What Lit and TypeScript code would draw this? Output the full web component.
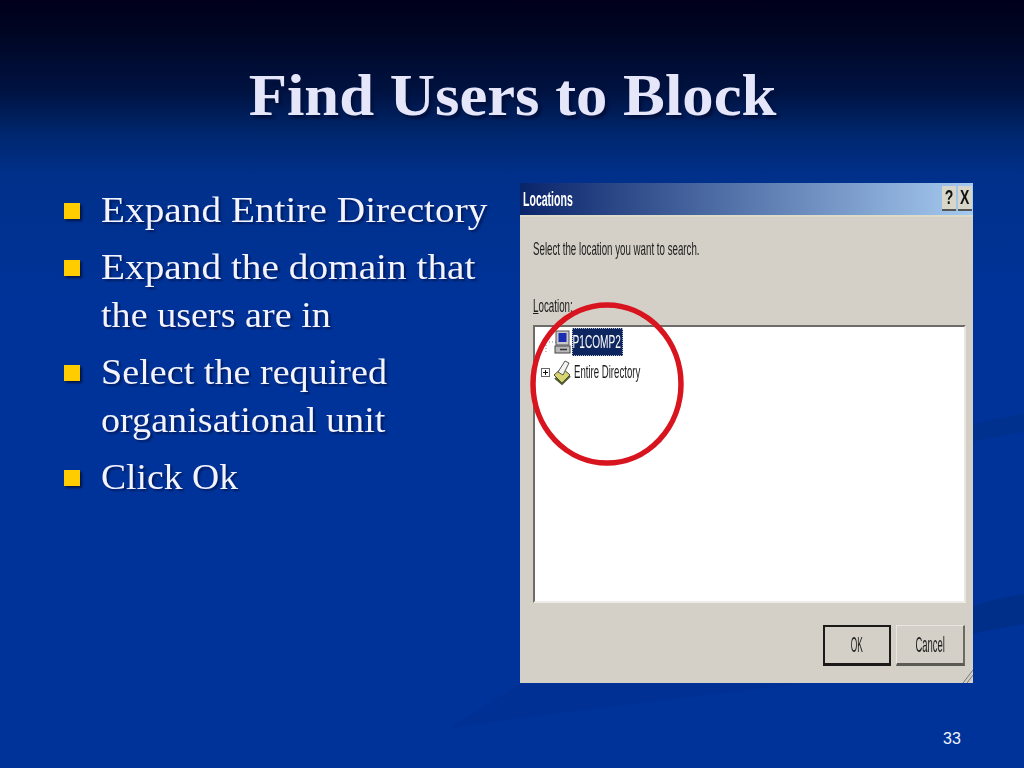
import { LitElement, html, css } from "lit";
import { customElement } from "lit/decorators.js";

@customElement("app-root")
export class AppRoot extends LitElement {
  static styles = css`
    :host { display: block; width: 1024px; height: 768px; overflow: hidden; }
    .slide {
      position: relative; width: 1024px; height: 768px; box-sizing: border-box;
      background: linear-gradient(180deg, #00001a 0px, #000522 30px, #001240 90px, #00276f 135px, #00308a 175px, #003399 300px, #003399 100%);
      font-family: "Liberation Serif", serif; color: #fff;
      display: flex; flex-direction: column;
    }
    .decor { position: absolute; inset: 0; width: 1024px; height: 768px; }
    h1 {
      position: relative; margin: 0; height: 183px; box-sizing: border-box; padding: 59px 0 0 2px;
      text-align: center; font-size: 60px; line-height: 72px; font-weight: 700; color: #e6e6fa;
    }
    h1 span { display: inline-block; transform: scaleX(1.045); text-shadow: 3px 3px 3px #00103c; }
    .content { position: relative; display: flex; align-items: flex-start; padding-left: 64px; }
    ul { list-style: none; margin: 0; padding: 3px 0 0; width: 456px; flex: none; }
    li {
      display: flex; gap: 21px; font-size: 36px; line-height: 48px; margin-bottom: 9px;
      text-shadow: 2px 2px 2px #001c5e; color: #f4f4ff;
    }
    .bullet { flex: none; width: 16px; height: 16px; margin-top: 17px; background: #ffcc00; box-shadow: 2px 2px 2px #00154a; }
    .txt { display: flex; flex-direction: column; align-items: flex-start; white-space: nowrap; }
    .txt span { display: block; transform-origin: left center; }
    .wide { transform: scaleX(1.092); }
    .mid { transform: scaleX(1.06); }
    .nar { transform: scaleX(1.046); }

    .dialog { width: 453px; height: 500px; background: #d4d0c8; display: flex; flex-direction: column; color: #1c1c1c; font-family: "Liberation Sans", sans-serif; position: relative; filter: blur(0.35px); }
    .titlebar {
      height: 34px; flex: none; display: flex; align-items: center; justify-content: space-between;
      background: linear-gradient(90deg, #0a246a, #a6caf0); padding: 0 1px 0 3px; box-sizing: border-box;
      border-bottom: 2px solid #dcdac8;
    }
    .cond { display: inline-block; transform-origin: left center; white-space: nowrap; }
    .ttl { color: #fff; font-weight: 700; font-size: 20px; transform: scaleX(0.527); }
    .ctrls { display: flex; gap: 2px; margin-bottom: 2px; }
    .ctrl {
      width: 14px; height: 25px; background: #d8d6c8; border-bottom: 2px solid #555; box-sizing: border-box;
      color: #111; font-weight: 700; font-size: 20px; line-height: 23px; text-align: center;
    }
    .ctrl span { display: inline-block; transform: scaleX(0.7); }
    .body { flex: 1; padding: 20px 7px 0 13px; display: flex; flex-direction: column; }
    .select { font-size: 19px; line-height: 24px; transform: scaleX(0.512); }
    .loc { margin-top: 33px; font-size: 19px; line-height: 24px; height: 24px; transform: scaleX(0.516); }
    .loc u { text-decoration: underline; }
    .tree {
      margin-top: 7px; height: 278px; box-sizing: border-box; background: #fff;
      border: 2px solid #6e6c68; border-right-color: #e8e6e0; border-bottom-color: #eeece6;
      padding: 1px 0 0 6px; display: flex; flex-direction: column; gap: 2px;
    }
    .node { display: flex; align-items: center; height: 28px; }
    .expander { width: 9px; height: 9px; flex: none; margin-right: 3px; }
    .nodeicon { width: 20px; height: 28px; flex: none; overflow: visible; }
    .label { font-size: 19px; line-height: 26px; }
    .sel { background: #0e2660; color: #fff; height: 28px; width: 51px; outline: 1px dotted #b0b8c8; outline-offset: -1px; overflow: hidden; margin-left: -1px; }
    .sel .cond { transform: scaleX(0.532); line-height: 28px; padding-left: 1px; }
    .ent { margin-left: 1px; }
    .ent .cond { transform: scaleX(0.506); }
    .buttons { display: flex; justify-content: flex-end; gap: 5px; margin: 22px 1px 0 0; }
    .btn {
      height: 41px; box-sizing: border-box; width: 69px; display: flex; align-items: center; justify-content: center;
      background: #d4d0c8; border: 1px solid #e8e6e0; border-right: 2px solid #6c6a64; border-bottom: 3px solid #5c5a54;
      font-size: 22px;
    }
    .btn .cond { transform: scaleX(0.43); transform-origin: center; }
    .btn.ok .cond { transform: scaleX(0.38); }
    .btn.ok { width: 68px; border: 2px solid #1c1a18; border-bottom-width: 3px; }
    .grip { position: absolute; right: 0; bottom: 0; width: 10px; height: 14px; }
    .ring { position: absolute; left: 9px; top: 118px; width: 156px; height: 166px; pointer-events: none; }
    .num { position: absolute; left: 943px; top: 729px; font: 16px/20px "Liberation Sans", sans-serif; color: #f0f4ff; }
  `;

  render() {
    return html`
      <div class="slide">
        <svg class="decor" viewBox="0 0 1024 768" aria-hidden="true">
          <path d="M973 606 C990 600 1008 597 1024 594 L1024 624 C1008 627 990 630 973 634 Z" fill="#002f8a"/>
          <path d="M973 424 C990 420 1008 417 1024 414 L1024 432 C1008 435 990 438 973 442 Z" fill="#00318f"/>
          <path d="M450 728 C560 712 680 698 800 684 L520 684 Z" fill="#003094"/>
        </svg>
        <h1><span>Find Users to Block</span></h1>
        <div class="content">
          <ul>
            <li><span class="bullet"></span><div class="txt"><span class="wide">Expand Entire Directory</span></div></li>
            <li><span class="bullet"></span><div class="txt"><span class="wide">Expand the domain that</span><span class="mid">the users are in</span></div></li>
            <li><span class="bullet"></span><div class="txt"><span class="mid">Select the required</span><span class="mid">organisational unit</span></div></li>
            <li><span class="bullet"></span><div class="txt"><span class="nar">Click Ok</span></div></li>
          </ul>
          <div class="dialog">
            <div class="titlebar">
              <span class="cond ttl">Locations</span>
              <div class="ctrls"><div class="ctrl"><span>?</span></div><div class="ctrl"><span>X</span></div></div>
            </div>
            <div class="body">
              <span class="cond select">Select the location you want to search.</span>
              <span class="cond loc"><u>L</u>ocation:</span>
              <div class="tree">
                <div class="node">
                  <span class="expander"></span>
                  <svg class="nodeicon" viewBox="0 0 20 28">
                    <path d="M-7 14H4M-7 14V24" stroke="#888" stroke-dasharray="1 2" fill="none"/>
                    <rect x="3" y="3" width="13" height="14" fill="#c8c8c8" stroke="#555"/>
                    <rect x="5.5" y="5" width="8" height="9" fill="#1a2cb0"/>
                    <rect x="2" y="18" width="15" height="7" fill="#b8b8b8" stroke="#444"/>
                    <path d="M7 21.5h7" stroke="#333" stroke-width="1.5"/>
                  </svg>
                  <span class="label sel"><span class="cond">P1COMP2</span></span>
                </div>
                <div class="node">
                  <svg class="expander" viewBox="0 0 9 9">
                    <rect x=".5" y=".5" width="8" height="8" fill="#fff" stroke="#666"/>
                    <path d="M2 4.5h5M4.5 2v5" stroke="#111"/>
                  </svg>
                  <svg class="nodeicon" viewBox="0 0 20 28">
                    <path d="M1 17 L9 10 L17 17 L9 25 Z" fill="#d8d470" stroke="#4a4a30"/>
                    <path d="M5 14 L12 3 L16 5 L10 17 Z" fill="#f4f4f0" stroke="#555"/>
                    <path d="M2 20 L9 26 L17 18" fill="none" stroke="#4e5a30" stroke-width="2"/>
                  </svg>
                  <span class="label ent"><span class="cond">Entire Directory</span></span>
                </div>
              </div>
              <div class="buttons">
                <span class="btn ok"><span class="cond">OK</span></span>
                <span class="btn"><span class="cond">Cancel</span></span>
              </div>
            </div>
            <svg class="grip" viewBox="0 0 10 14"><path d="M0 14 L10 1 M4 14 L10 6" stroke="#777" fill="none"/></svg>
            <svg class="ring" viewBox="0 0 156 166">
              <ellipse cx="78" cy="83" rx="74" ry="79" fill="none" stroke="#d8141e" stroke-width="5.5"/>
            </svg>
          </div>
        </div>
        <span class="num">33</span>
      </div>
    `;
  }
}
